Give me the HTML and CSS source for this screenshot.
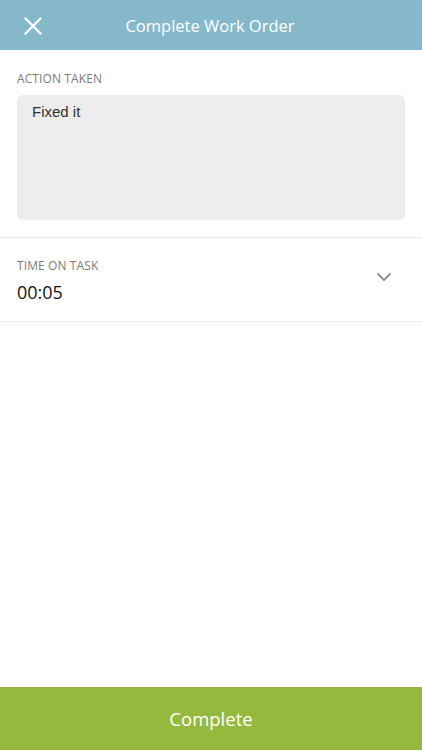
FILE: index.html
```html
<!DOCTYPE html>
<html lang="en">
<head>
  <meta charset="UTF-8">
  <title>Complete Work Order</title>
  <link rel="stylesheet" href="styles.css">
</head>
<body>
  <div class="screen">
    <div class="topbar">
      <button class="close">
        <svg width="18" height="18" viewBox="0 0 18 18">
          <path d="M1.5 1.5 L16.5 16.5 M16.5 1.5 L1.5 16.5" stroke="#fff" stroke-width="2.4" stroke-linecap="round"/>
        </svg>
      </button>
      <div class="title">Complete Work Order</div>
    </div>

    <div class="section action">
      <div class="label">ACTION TAKEN</div>
      <div class="notes">Fixed it</div>
    </div>

    <div class="section time">
      <div>
        <div class="label">TIME ON TASK</div>
        <div class="value">00:05</div>
      </div>
      <svg class="chevron" width="16" height="10" viewBox="0 0 16 10">
        <path d="M1.5 1.5 L8 8 L14.5 1.5" fill="none" stroke="#8a8a8a" stroke-width="1.8"/>
      </svg>
    </div>

    <div class="spacer"></div>

    <button class="complete">Complete</button>
  </div>
</body>
</html>
```

FILE: styles.css
```css
body {
  margin: 0;
  font-family: "Open Sans", sans-serif;
  background: white;
}

.screen {
  width: 422px;
  height: 750px;
  display: flex;
  flex-direction: column;
}

.topbar {
  height: 50px;
  background: #86b8cb;
  display: flex;
  align-items: center;
  position: relative;
}

.topbar .close {
  position: absolute;
  left: 24px;
  top: 17px;
  padding: 0;
  border: none;
  background: none;
  width: 18px;
  height: 18px;
}

.topbar .title {
  flex: 1;
  text-align: center;
  color: white;
  font-size: 16.5px;
  margin-left: -2px;
}

.section {
  border-bottom: 1px solid #e6e6e6;
}

.label {
  font-size: 12px;
  color: #7a7a7a;
  letter-spacing: 0.1px;
}

.action {
  padding: 20px 17px 17px;
}

.action .notes {
  margin-top: 8px;
  height: 125px;
  box-sizing: border-box;
  background: #ededed;
  border-radius: 6px;
  padding: 8px 15px;
  font-family: "Liberation Sans", Arial, sans-serif;
  font-size: 15px;
  color: #333;
}

.time {
  display: flex;
  justify-content: space-between;
  align-items: center;
  padding: 19px 30px 17px 17px;
}

.time .value {
  font-size: 18px;
  color: #111;
  margin-top: 6px;
}

.time .chevron {
  margin-top: -7px;
}

.spacer {
  flex: 1;
}

.complete {
  height: 63px;
  border: none;
  background: #95b93d;
  color: white;
  font-family: "Open Sans", sans-serif;
  font-size: 18.5px;
  padding: 0;
}
```
